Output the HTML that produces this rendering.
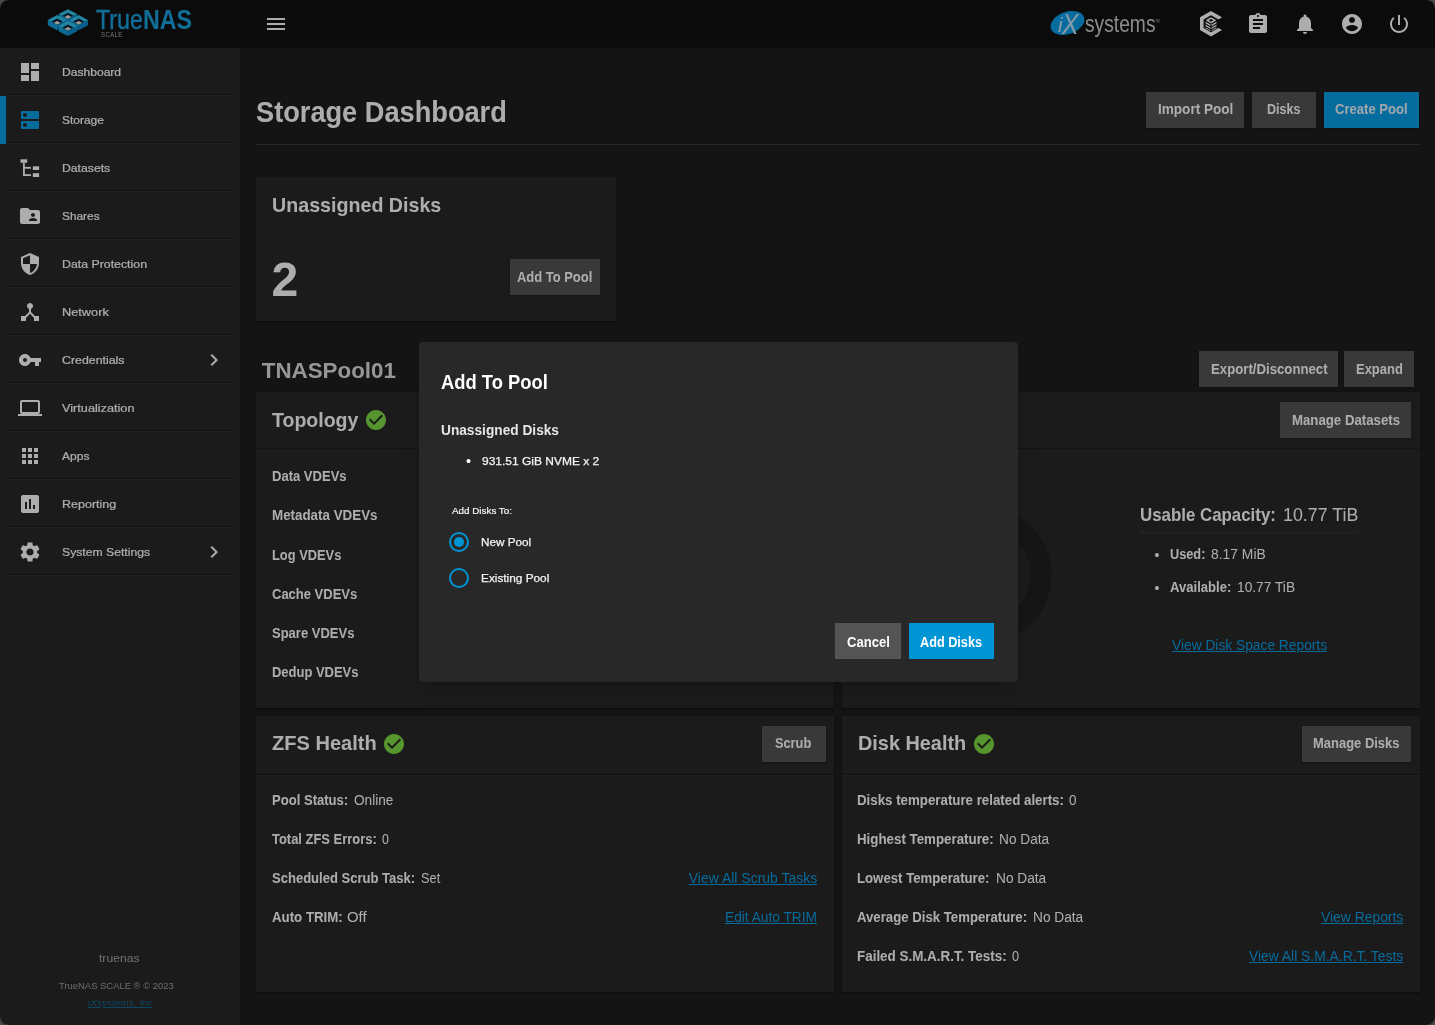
<!DOCTYPE html>
<html lang="en">
<head>
<meta charset="utf-8">
<title>TrueNAS - Storage Dashboard</title>
<style>
html,body{margin:0;padding:0;background:#1e1e1e;}
body{width:1435px;height:1025px;overflow:hidden;position:relative;font-family:"Liberation Sans",sans-serif;}
#app,#ov,#dl{position:absolute;left:0;top:0;width:1435px;height:1025px;overflow:hidden;}
#app{background:#1e1e1e;}
#ov{background:rgba(0,0,0,.32);}
.t{position:absolute;white-space:nowrap;transform-origin:0 50%;}
.a{position:absolute;}
.tl{position:absolute;left:0;top:0;width:1435px;height:1025px;will-change:transform;}
.hdr{left:0;top:0;width:1435px;height:48px;background:#111111;}
.side{left:0;top:48px;width:240px;height:977px;background:#282828;}
.sep{left:8px;width:225px;height:2px;background:#212121;box-shadow:0 -1px 0 #2d2d2d,0 1px 0 #2d2d2d;}
.card{background:#282828;box-shadow:0 2px 1px -1px rgba(0,0,0,.2),0 1px 1px rgba(0,0,0,.14),0 1px 3px rgba(0,0,0,.12);}
.btn{background:#545454;height:36px;box-shadow:0 1px 2px rgba(0,0,0,.25);}
.pri{background:#0a9ee8;}
.ln{height:1px;background:#383838;}
.dv{height:1.6px;background:#1f1f1f;box-shadow:0 -1px 0 #2d2d2d,0 1px 0 #2d2d2d;}
svg{display:block;}
.ic{position:absolute;fill:#ffffff;}
</style>
</head>
<body>
<div id="app">
<div class="a" style="left:240px;top:48px;width:1195px;height:977px;background:#1e1e1e"></div>

<!-- cards -->
<div class="a card" style="left:256px;top:176.5px;width:360.3px;height:144px"></div>
<div class="a card" style="left:256px;top:392px;width:578px;height:315.5px"></div>
<div class="a card" style="left:842px;top:392px;width:578px;height:315.5px"></div>
<div class="a card" style="left:256px;top:716px;width:578px;height:276px"></div>
<div class="a card" style="left:842px;top:716px;width:578px;height:276px"></div>

<!-- dividers -->
<div class="a ln" style="left:256px;top:144.2px;width:1164px"></div>
<div class="a dv" style="left:256px;top:448.2px;width:578px"></div>
<div class="a dv" style="left:842px;top:448.2px;width:578px"></div>
<div class="a dv" style="left:256px;top:773.2px;width:578px"></div>
<div class="a dv" style="left:842px;top:773.2px;width:578px"></div>
<div class="a" style="left:1140px;top:531.4px;width:218px;height:2.6px;background:#303030"></div>

<!-- donut -->
<svg class="a" style="left:900px;top:495px" width="160" height="160" viewBox="0 0 160 160"><circle cx="83" cy="80" r="58" fill="none" stroke="#202020" stroke-width="21"/></svg>

<!-- buttons -->
<div class="a btn" style="left:1146px;top:92px;width:98px"></div>
<div class="a btn" style="left:1252px;top:92px;width:64px"></div>
<div class="a btn pri" style="left:1324px;top:92px;width:95px"></div>
<div class="a btn" style="left:510px;top:259px;width:90px"></div>
<div class="a btn" style="left:1199px;top:351.3px;width:139.2px"></div>
<div class="a btn" style="left:1344px;top:351.3px;width:70px"></div>
<div class="a btn" style="left:1280px;top:402px;width:130.7px"></div>
<div class="a btn" style="left:762px;top:726px;width:64px"></div>
<div class="a btn" style="left:1302px;top:726px;width:108.7px"></div>

<!-- check icons -->
<svg class="ic" style="left:364px;top:408.2px;fill:#80de45" width="24" height="24" viewBox="0 0 24 24"><path d="M12 2C6.48 2 2 6.48 2 12s4.48 10 10 10 10-4.48 10-10S17.52 2 12 2zm-2 15l-5-5 1.41-1.41L10 14.17l7.59-7.59L19 8l-9 9z"/></svg>
<svg class="ic" style="left:382px;top:732px;fill:#80de45" width="24" height="24" viewBox="0 0 24 24"><path d="M12 2C6.48 2 2 6.48 2 12s4.48 10 10 10 10-4.48 10-10S17.52 2 12 2zm-2 15l-5-5 1.41-1.41L10 14.17l7.59-7.59L19 8l-9 9z"/></svg>
<svg class="ic" style="left:972px;top:732px;fill:#80de45" width="24" height="24" viewBox="0 0 24 24"><path d="M12 2C6.48 2 2 6.48 2 12s4.48 10 10 10 10-4.48 10-10S17.52 2 12 2zm-2 15l-5-5 1.41-1.41L10 14.17l7.59-7.59L19 8l-9 9z"/></svg>

<!-- header -->
<div class="a hdr"></div>
<svg style="position:absolute;left:0;top:0" width="100" height="48" viewBox="0 0 100 48"><polygon points="58.6,14.1 67.9,19.0 67.9,24.3 58.6,19.4" fill="#12a0e0"/><polygon points="77.2,14.1 67.9,19.0 67.9,24.3 77.2,19.4" fill="#0a8ccc"/><polygon points="67.9,9.2 77.2,14.1 67.9,19.0 58.6,14.1" fill="#35c4f0"/><polygon points="67.9,12.7 73.5,15.7 67.9,18.7 62.3,15.7" fill="#04233a"/><polygon points="67.9,15.1 71.2,16.9 67.9,18.7 64.6,16.9" fill="#f4e4dc"/><polygon points="47.8,20.0 57.1,24.9 57.1,30.2 47.8,25.3" fill="#12a0e0"/><polygon points="66.4,20.0 57.1,24.9 57.1,30.2 66.4,25.3" fill="#0a8ccc"/><polygon points="57.1,15.1 66.4,20.0 57.1,24.9 47.8,20.0" fill="#35c4f0"/><polygon points="57.1,18.6 62.7,21.6 57.1,24.6 51.5,21.6" fill="#04233a"/><polygon points="57.1,21.0 60.4,22.8 57.1,24.6 53.8,22.8" fill="#f4e4dc"/><polygon points="69.4,20.0 78.7,24.9 78.7,30.2 69.4,25.3" fill="#12a0e0"/><polygon points="88.0,20.0 78.7,24.9 78.7,30.2 88.0,25.3" fill="#0a8ccc"/><polygon points="78.7,15.1 88.0,20.0 78.7,24.9 69.4,20.0" fill="#35c4f0"/><polygon points="78.7,18.6 84.3,21.6 78.7,24.6 73.1,21.6" fill="#04233a"/><polygon points="78.7,21.0 82.0,22.8 78.7,24.6 75.4,22.8" fill="#f4e4dc"/><polygon points="58.6,25.9 67.9,30.8 67.9,36.1 58.6,31.2" fill="#12a0e0"/><polygon points="77.2,25.9 67.9,30.8 67.9,36.1 77.2,31.2" fill="#0a8ccc"/><polygon points="67.9,21.0 77.2,25.9 67.9,30.8 58.6,25.9" fill="#35c4f0"/><polygon points="67.9,24.5 73.5,27.5 67.9,30.5 62.3,27.5" fill="#04233a"/><polygon points="67.9,26.9 71.2,28.7 67.9,30.5 64.6,28.7" fill="#f4e4dc"/></svg>
<svg class="ic" style="left:264px;top:12px" width="24" height="24" viewBox="0 0 24 24"><path d="M3 18h18v-2H3v2zm0-5h18v-2H3v2zm0-7v2h18V6H3z"/></svg>
<div class="a" style="left:1049.5px;top:12px;width:35px;height:22px;border-radius:50%;background:#0a9ee8;transform:rotate(-19deg)"></div>
<svg class="ic" style="left:1199.6px;top:11.4px" width="23" height="26" viewBox="0 0 23 26"><path d="M11 0L22 6.300 18.400 8.400 11 4.150 3.600 8.400V17L11 21.250 18.400 17 22 19.100 11 25.400 0 19.100V6.300z"/><path d="M11 6.200L16.300 9.300 11 12.400 5.700 9.300z M11 7.900L8.600 9.300 11 10.700 13.400 9.300z M5.500 10.700L10.500 13.600v1.600L5.500 12.300z M5.500 13.500L10.500 16.400v1.600L5.500 15.100z M5.500 16.300L10.500 19.200v.9L5.500 17.200z M16.500 10.700L11.500 13.600v1.600L16.500 12.300z M16.500 13.500L11.500 16.400v1.600L16.500 15.100z M16.500 16.300L11.500 19.200v.9L16.500 17.200z" fill-rule="evenodd"/></svg>
<svg class="ic" style="left:1246px;top:12px" width="24" height="24" viewBox="0 0 24 24"><path d="M19 3h-4.18C14.4 1.84 13.3 1 12 1c-1.3 0-2.4.84-2.82 2H5c-1.1 0-2 .9-2 2v14c0 1.1.9 2 2 2h14c1.1 0 2-.9 2-2V5c0-1.1-.9-2-2-2zm-7 0c.55 0 1 .45 1 1s-.45 1-1 1-1-.45-1-1 .45-1 1-1zm2 14H7v-2h7v2zm3-4H7v-2h10v2zm0-4H7V7h10v2z"/></svg>
<svg class="ic" style="left:1292.8px;top:11.8px" width="24" height="24" viewBox="0 0 24 24"><path d="M12 22c1.1 0 2-.9 2-2h-4c0 1.1.89 2 2 2zm6-6v-5c0-3.07-1.64-5.64-4.5-6.320V4c0-.83-.67-1.5-1.5-1.5s-1.500.67-1.500 1.500v.68C7.630 5.360 6 7.920 6 11v5l-2 2v1h16v-1l-2-2z"/></svg>
<svg class="ic" style="left:1340.3px;top:11.6px" width="24" height="24" viewBox="0 0 24 24"><path d="M12 2C6.48 2 2 6.48 2 12s4.48 10 10 10 10-4.48 10-10S17.52 2 12 2zm0 3c1.66 0 3 1.34 3 3s-1.340 3-3 3-3-1.340-3-3 1.340-3 3-3zm0 14.200c-2.500 0-4.710-1.280-6-3.220.03-1.990 4-3.080 6-3.080 1.990 0 5.970 1.090 6 3.080-1.290 1.940-3.500 3.220-6 3.220z"/></svg>
<svg class="ic" style="left:1386.6px;top:11.8px" width="24" height="24" viewBox="0 0 24 24"><path d="M13 3h-2v10h2V3zm4.830 2.170l-1.420 1.420C17.990 7.860 19 9.810 19 12c0 3.870-3.130 7-7 7s-7-3.130-7-7c0-2.190 1.010-4.140 2.580-5.420L6.170 5.170C4.230 6.820 3 9.260 3 12c0 4.970 4.030 9 9 9s9-4.030 9-9c0-2.740-1.230-5.180-3.170-6.830z"/></svg>

<!-- sidebar -->
<div class="a side"></div>
<div class="a" style="left:0;top:96px;width:6px;height:48px;background:#0a9ee8"></div>
<div class="a sep" style="top:93px"></div>
<div class="a sep" style="top:141px"></div>
<div class="a sep" style="top:189px"></div>
<div class="a sep" style="top:237px"></div>
<div class="a sep" style="top:285px"></div>
<div class="a sep" style="top:333px"></div>
<div class="a sep" style="top:381px"></div>
<div class="a sep" style="top:429px"></div>
<div class="a sep" style="top:477px"></div>
<div class="a sep" style="top:525px"></div>
<div class="a sep" style="top:573px"></div>
<svg class="ic" style="left:18px;top:60px;" width="24" height="24" viewBox="0 0 24 24"><path d="M3 13h8V3H3v10zm0 8h8v-6H3v6zm10 0h8V11h-8v10zm0-18v6h8V3h-8z"/></svg>
<svg class="ic" style="left:18px;top:108px;fill:#0a9ee8;" width="24" height="24" viewBox="0 0 24 24"><path d="M20 13H4c-.55 0-1 .45-1 1v6c0 .55.45 1 1 1h16c.55 0 1-.45 1-1v-6c0-.55-.45-1-1-1zM7 19c-1.100 0-2-.9-2-2s.9-2 2-2 2 .9 2 2-.9 2-2 2zM20 3H4c-.55 0-1 .45-1 1v6c0 .55.45 1 1 1h16c.55 0 1-.45 1-1V4c0-.55-.45-1-1-1zM7 9c-1.100 0-2-.9-2-2s.9-2 2-2 2 .9 2 2-.9 2-2 2z"/></svg>
<svg class="ic" style="left:18px;top:156px;" width="24" height="24" viewBox="0 0 24 24"><rect x="2.5" y="3.3" width="6.7" height="3.5"/><rect x="5" y="6.8" width="1.8" height="13.2"/><rect x="5" y="10.9" width="8" height="1.8"/><rect x="5" y="18.2" width="8" height="1.8"/><rect x="14.8" y="10.3" width="6.3" height="3.7"/><rect x="14.8" y="17.2" width="6.3" height="3.8"/></svg>
<svg class="ic" style="left:18px;top:204px;" width="24" height="24" viewBox="0 0 24 24"><path d="M20 6h-8l-2-2H4c-1.100 0-1.990.9-1.990 2L2 18c0 1.100.9 2 2 2h16c1.100 0 2-.9 2-2V8c0-1.100-.9-2-2-2zm-5 3c1.100 0 2 .9 2 2s-.9 2-2 2-2-.9-2-2 .9-2 2-2zm4 8h-8v-1c0-1.330 2.670-2 4-2s4 .67 4 2v1z"/></svg>
<svg class="ic" style="left:18px;top:252px;" width="24" height="24" viewBox="0 0 24 24"><path d="M12 1L3 5v6c0 5.550 3.840 10.740 9 12 5.160-1.260 9-6.450 9-12V5l-9-4zm0 10.990h7c-.53 4.120-3.280 7.790-7 8.940V12H5V6.300l7-3.110v8.800z"/></svg>
<svg class="ic" style="left:18px;top:300px;" width="24" height="24" viewBox="0 0 24 24"><path d="M17 16l-4-4V8.820C14.160 8.400 15 7.300 15 6c0-1.660-1.340-3-3-3S9 4.340 9 6c0 1.300.84 2.400 2 2.820V12l-4 4H3v5h5v-3.050l4-4.200 4 4.200V21h5v-5h-4z"/></svg>
<svg class="ic" style="left:18px;top:348px;" width="24" height="24" viewBox="0 0 24 24"><path d="M12.650 10C11.830 7.670 9.610 6 7 6c-3.310 0-6 2.690-6 6s2.690 6 6 6c2.610 0 4.830-1.670 5.650-4H17v4h4v-4h2v-4H12.650zM7 14c-1.100 0-2-.9-2-2s.9-2 2-2 2 .9 2 2-.9 2-2 2z"/></svg>
<svg class="ic" style="left:18px;top:396px;" width="24" height="24" viewBox="0 0 24 24"><path d="M20 18c1.100 0 1.990-.9 1.990-2L22 6c0-1.100-.9-2-2-2H4c-1.100 0-2 .9-2 2v10c0 1.100.9 2 2 2H0v2h24v-2h-4zM4 6h16v10H4V6z"/></svg>
<svg class="ic" style="left:18px;top:444px;" width="24" height="24" viewBox="0 0 24 24"><path d="M4 8h4V4H4v4zm6 12h4v-4h-4v4zm-6 0h4v-4H4v4zm0-6h4v-4H4v4zm6 0h4v-4h-4v4zm6-10v4h4V4h-4zm-6 4h4V4h-4v4zm6 6h4v-4h-4v4zm0 6h4v-4h-4v4z"/></svg>
<svg class="ic" style="left:18px;top:492px;" width="24" height="24" viewBox="0 0 24 24"><path d="M19 3H5c-1.100 0-2 .9-2 2v14c0 1.100.9 2 2 2h14c1.100 0 2-.9 2-2V5c0-1.100-.9-2-2-2zM9 17H7v-7h2v7zm4 0h-2V7h2v10zm4 0h-2v-4h2v4z"/></svg>
<svg class="ic" style="left:18px;top:540px;" width="24" height="24" viewBox="0 0 24 24"><path d="M19.140 12.940c.04-.3.06-.61.06-.94 0-.32-.02-.64-.07-.94l2.030-1.580c.18-.14.23-.41.12-.61l-1.920-3.320c-.12-.22-.37-.29-.59-.22l-2.390.96c-.5-.38-1.030-.7-1.620-.94l-.36-2.540c-.04-.24-.24-.41-.48-.41h-3.840c-.24 0-.43.17-.47.41l-.36 2.540c-.59.24-1.130.57-1.620.94l-2.390-.96c-.22-.08-.47 0-.59.22L2.740 8.870c-.12.21-.08.47.12.61l2.030 1.580c-.05.3-.09.63-.09.94s.02.64.07.94l-2.030 1.580c-.18.14-.23.41-.12.61l1.920 3.320c.12.22.37.29.59.22l2.390-.96c.5.38 1.030.7 1.620.94l.36 2.540c.05.24.24.41.48.41h3.840c.24 0 .44-.17.47-.41l.36-2.540c.59-.24 1.130-.56 1.620-.94l2.390.96c.22.08.47 0 .59-.22l1.920-3.320c.12-.22.07-.47-.12-.61l-2.010-1.580zM12 15.600c-1.980 0-3.600-1.620-3.600-3.600s1.620-3.600 3.600-3.600 3.600 1.620 3.600 3.600-1.620 3.600-3.600 3.600z"/></svg>
<svg class="ic" style="left:202px;top:348.3px" width="24" height="24" viewBox="0 0 24 24"><path d="M10 6L8.590 7.410 13.170 12l-4.580 4.590L10 18l6-6z"/></svg>
<svg class="ic" style="left:202px;top:540.3px" width="24" height="24" viewBox="0 0 24 24"><path d="M10 6L8.590 7.410 13.170 12l-4.580 4.590L10 18l6-6z"/></svg>

<div class="tl">
<span class="t" style="left:62.2px;top:66px;line-height:12px;font-size:11.38px;color:#ffffff;transform:scaleX(1.0619);-webkit-text-stroke:.2px #fff;">Dashboard</span>
<span class="t" style="left:62.2px;top:114px;line-height:12px;font-size:11.38px;color:#ffffff;transform:scaleX(1.0491);-webkit-text-stroke:.2px #fff;">Storage</span>
<span class="t" style="left:62.2px;top:162px;line-height:12px;font-size:11.38px;color:#ffffff;transform:scaleX(1.0737);-webkit-text-stroke:.2px #fff;">Datasets</span>
<span class="t" style="left:62.2px;top:210px;line-height:12px;font-size:11.38px;color:#ffffff;transform:scaleX(1.0431);-webkit-text-stroke:.2px #fff;">Shares</span>
<span class="t" style="left:62.2px;top:258px;line-height:12px;font-size:11.38px;color:#ffffff;transform:scaleX(1.0841);-webkit-text-stroke:.2px #fff;">Data Protection</span>
<span class="t" style="left:62.2px;top:306px;line-height:12px;font-size:11.38px;color:#ffffff;transform:scaleX(1.1218);-webkit-text-stroke:.2px #fff;">Network</span>
<span class="t" style="left:62.2px;top:354px;line-height:12px;font-size:11.38px;color:#ffffff;transform:scaleX(1.0861);-webkit-text-stroke:.2px #fff;">Credentials</span>
<span class="t" style="left:62.2px;top:402px;line-height:12px;font-size:11.38px;color:#ffffff;transform:scaleX(1.1167);-webkit-text-stroke:.2px #fff;">Virtualization</span>
<span class="t" style="left:62.2px;top:450px;line-height:12px;font-size:11.38px;color:#ffffff;transform:scaleX(1.0564);-webkit-text-stroke:.2px #fff;">Apps</span>
<span class="t" style="left:62.2px;top:498px;line-height:12px;font-size:11.38px;color:#ffffff;transform:scaleX(1.0988);-webkit-text-stroke:.2px #fff;">Reporting</span>
<span class="t" style="left:62.2px;top:546px;line-height:12px;font-size:11.38px;color:#ffffff;transform:scaleX(1.0719);-webkit-text-stroke:.2px #fff;">System Settings</span>
<span class="t" style="left:99.3px;top:951px;line-height:13px;font-size:11.73px;color:#a8a8a8;transform:scaleX(1.0360);">truenas</span>
<span class="t" style="left:59.2px;top:980px;line-height:11px;font-size:9.78px;color:#a0a0a0;transform:scaleX(0.9655);">TrueNAS SCALE ® © 2023</span>
<span class="t" style="left:87.6px;top:997px;line-height:11px;font-size:9.50px;color:#0a9ee8;transform:scaleX(1.0547);font-style:italic;text-decoration:underline;opacity:.55;">iXsystems, Inc</span>
<span class="t" style="left:96.2px;top:4px;line-height:31px;font-size:27.09px;color:#1aa3e0;transform:scaleX(0.8583);"><span style="font-weight:400;-webkit-text-stroke:.45px #1aa3e0">True</span><b>NAS</b></span>
<span class="t" style="left:101.2px;top:31px;line-height:7px;font-size:6.98px;color:#b0b0b0;transform:scaleX(0.8596);letter-spacing:.5px;">SCALE</span>
<span class="t" style="left:1085.3px;top:11px;line-height:26px;font-size:23.32px;color:#d0d0d0;transform:scaleX(0.8246);">systems</span>
<span class="t" style="left:1155.2px;top:17px;line-height:11px;font-size:10.34px;color:#a0a0a0;transform:scaleX(0.4841);">™</span>
<span class="t" style="left:1057.6px;top:13px;line-height:23px;font-size:20.95px;color:#c4e4f6;transform:scaleX(0.9879);font-style:italic;">i</span>
<span class="t" style="left:1062.0px;top:8px;line-height:32px;font-size:29.19px;color:#c4e4f6;transform:scaleX(0.8475);font-style:italic;">X</span>
<span class="t" style="left:256.2px;top:95px;line-height:33px;font-size:29.89px;color:#ffffff;font-weight:700;transform:scaleX(0.9101);">Storage Dashboard</span>
<span class="t" style="left:1157.7px;top:101px;line-height:16px;font-size:14.53px;color:#ffffff;font-weight:700;transform:scaleX(0.9338);">Import Pool</span>
<span class="t" style="left:1267.0px;top:101px;line-height:16px;font-size:14.53px;color:#ffffff;font-weight:700;transform:scaleX(0.8649);">Disks</span>
<span class="t" style="left:1335.4px;top:101px;line-height:16px;font-size:14.53px;color:#eaf6ff;font-weight:700;transform:scaleX(0.8999);">Create Pool</span>
<span class="t" style="left:272.0px;top:193px;line-height:23px;font-size:20.95px;color:#ffffff;font-weight:700;transform:scaleX(0.9386);">Unassigned Disks</span>
<span class="t" style="left:271.5px;top:253px;line-height:53px;font-size:48.04px;color:#ffffff;font-weight:700;">2</span>
<span class="t" style="left:517.3px;top:269px;line-height:16px;font-size:14.53px;color:#ffffff;font-weight:700;transform:scaleX(0.8923);">Add To Pool</span>
<span class="t" style="left:261.8px;top:358px;line-height:25px;font-size:22.35px;color:#dedede;font-weight:700;">TNASPool01</span>
<span class="t" style="left:1210.7px;top:361px;line-height:16px;font-size:14.53px;color:#ffffff;font-weight:700;transform:scaleX(0.9092);">Export/Disconnect</span>
<span class="t" style="left:1355.8px;top:361px;line-height:16px;font-size:14.53px;color:#ffffff;font-weight:700;transform:scaleX(0.8925);">Expand</span>
<span class="t" style="left:272.1px;top:408px;line-height:23px;font-size:20.95px;color:#ffffff;font-weight:700;transform:scaleX(0.9325);">Topology</span>
<span class="t" style="left:1291.6px;top:412px;line-height:16px;font-size:14.53px;color:#ffffff;font-weight:700;transform:scaleX(0.9107);">Manage Datasets</span>
<span class="t" style="left:272.0px;top:468px;line-height:16px;font-size:13.97px;color:#ffffff;font-weight:700;transform:scaleX(0.9329);">Data VDEVs</span>
<span class="t" style="left:272.0px;top:507px;line-height:16px;font-size:13.97px;color:#ffffff;font-weight:700;transform:scaleX(0.9569);">Metadata VDEVs</span>
<span class="t" style="left:272.0px;top:547px;line-height:16px;font-size:13.97px;color:#ffffff;font-weight:700;transform:scaleX(0.9204);">Log VDEVs</span>
<span class="t" style="left:272.0px;top:586px;line-height:16px;font-size:13.97px;color:#ffffff;font-weight:700;transform:scaleX(0.9299);">Cache VDEVs</span>
<span class="t" style="left:272.0px;top:625px;line-height:16px;font-size:13.97px;color:#ffffff;font-weight:700;transform:scaleX(0.9309);">Spare VDEVs</span>
<span class="t" style="left:272.0px;top:664px;line-height:16px;font-size:13.97px;color:#ffffff;font-weight:700;transform:scaleX(0.9285);">Dedup VDEVs</span>
<span class="t" style="left:1140.4px;top:505px;line-height:20px;font-size:18.16px;color:#ffffff;font-weight:700;transform:scaleX(0.9287);">Usable Capacity:</span>
<span class="t" style="left:1282.7px;top:505px;line-height:20px;font-size:18.16px;color:#ffffff;transform:scaleX(0.9815);">10.77 TiB</span>
<span class="t" style="left:1154.5px;top:547px;line-height:16px;font-size:13.97px;color:#ffffff;">•</span>
<span class="t" style="left:1154.5px;top:580px;line-height:16px;font-size:13.97px;color:#ffffff;">•</span>
<span class="t" style="left:1170.3px;top:546px;line-height:16px;font-size:13.97px;color:#ffffff;font-weight:700;transform:scaleX(0.9121);">Used:</span>
<span class="t" style="left:1211.3px;top:546px;line-height:16px;font-size:13.97px;color:#ffffff;transform:scaleX(0.9923);">8.17 MiB</span>
<span class="t" style="left:1170.3px;top:579px;line-height:16px;font-size:13.97px;color:#ffffff;font-weight:700;transform:scaleX(0.9376);">Available:</span>
<span class="t" style="left:1237.2px;top:579px;line-height:16px;font-size:13.97px;color:#ffffff;transform:scaleX(0.9842);">10.77 TiB</span>
<span class="t" style="left:1172.2px;top:637px;line-height:16px;font-size:13.97px;color:#0a9ee8;transform:scaleX(0.9856);text-decoration:underline;">View Disk Space Reports</span>
<span class="t" style="left:272.0px;top:731px;line-height:23px;font-size:20.95px;color:#ffffff;font-weight:700;transform:scaleX(0.9574);">ZFS Health</span>
<span class="t" style="left:775.3px;top:735px;line-height:16px;font-size:14.53px;color:#ffffff;font-weight:700;transform:scaleX(0.8799);">Scrub</span>
<span class="t" style="left:272.0px;top:792px;line-height:16px;font-size:13.97px;color:#ffffff;font-weight:700;transform:scaleX(0.9350);">Pool Status:</span>
<span class="t" style="left:353.5px;top:792px;line-height:16px;font-size:13.97px;color:#ffffff;transform:scaleX(0.9755);">Online</span>
<span class="t" style="left:272.0px;top:831px;line-height:16px;font-size:13.97px;color:#ffffff;font-weight:700;transform:scaleX(0.9260);">Total ZFS Errors:</span>
<span class="t" style="left:382.3px;top:831px;line-height:16px;font-size:13.97px;color:#ffffff;transform:scaleX(0.8867);">0</span>
<span class="t" style="left:272.0px;top:870px;line-height:16px;font-size:13.97px;color:#ffffff;font-weight:700;transform:scaleX(0.9332);">Scheduled Scrub Task:</span>
<span class="t" style="left:420.8px;top:870px;line-height:16px;font-size:13.97px;color:#ffffff;transform:scaleX(0.9156);">Set</span>
<span class="t" style="left:272.0px;top:909px;line-height:16px;font-size:13.97px;color:#ffffff;font-weight:700;transform:scaleX(0.9505);">Auto TRIM:</span>
<span class="t" style="left:347.4px;top:909px;line-height:16px;font-size:13.97px;color:#ffffff;transform:scaleX(1.0667);">Off</span>
<span class="t" style="left:688.8px;top:870px;line-height:16px;font-size:13.97px;color:#0a9ee8;text-decoration:underline;">View All Scrub Tasks</span>
<span class="t" style="left:725.1px;top:909px;line-height:16px;font-size:13.97px;color:#0a9ee8;transform:scaleX(0.9820);text-decoration:underline;">Edit Auto TRIM</span>
<span class="t" style="left:857.6px;top:731px;line-height:23px;font-size:20.95px;color:#ffffff;font-weight:700;transform:scaleX(0.9487);">Disk Health</span>
<span class="t" style="left:1313.1px;top:735px;line-height:16px;font-size:14.53px;color:#ffffff;font-weight:700;transform:scaleX(0.8935);">Manage Disks</span>
<span class="t" style="left:857.4px;top:792px;line-height:16px;font-size:13.97px;color:#ffffff;font-weight:700;transform:scaleX(0.9517);">Disks temperature related alerts:</span>
<span class="t" style="left:1069.0px;top:792px;line-height:16px;font-size:13.97px;color:#ffffff;transform:scaleX(0.9639);">0</span>
<span class="t" style="left:857.4px;top:831px;line-height:16px;font-size:13.97px;color:#ffffff;font-weight:700;transform:scaleX(0.9537);">Highest Temperature:</span>
<span class="t" style="left:999.3px;top:831px;line-height:16px;font-size:13.97px;color:#ffffff;transform:scaleX(0.9795);">No Data</span>
<span class="t" style="left:857.4px;top:870px;line-height:16px;font-size:13.97px;color:#ffffff;font-weight:700;transform:scaleX(0.9448);">Lowest Temperature:</span>
<span class="t" style="left:995.6px;top:870px;line-height:16px;font-size:13.97px;color:#ffffff;transform:scaleX(0.9795);">No Data</span>
<span class="t" style="left:857.4px;top:909px;line-height:16px;font-size:13.97px;color:#ffffff;font-weight:700;transform:scaleX(0.9443);">Average Disk Temperature:</span>
<span class="t" style="left:1032.8px;top:909px;line-height:16px;font-size:13.97px;color:#ffffff;transform:scaleX(0.9795);">No Data</span>
<span class="t" style="left:857.4px;top:948px;line-height:16px;font-size:13.97px;color:#ffffff;font-weight:700;transform:scaleX(0.9605);">Failed S.M.A.R.T. Tests:</span>
<span class="t" style="left:1012.3px;top:948px;line-height:16px;font-size:13.97px;color:#ffffff;transform:scaleX(0.9124);">0</span>
<span class="t" style="left:1320.9px;top:909px;line-height:16px;font-size:13.97px;color:#0a9ee8;transform:scaleX(0.9936);text-decoration:underline;">View Reports</span>
<span class="t" style="left:1249.0px;top:948px;line-height:16px;font-size:13.97px;color:#0a9ee8;transform:scaleX(0.9914);text-decoration:underline;">View All S.M.A.R.T. Tests</span>
</div>
</div>
<div id="ov"></div>
<div id="dl">
<div class="a" style="left:418.5px;top:342px;width:599.2px;height:340px;background:#282828;border-radius:4px;box-shadow:0 6px 12px -4px rgba(0,0,0,.18),0 12px 30px 2px rgba(0,0,0,.08)"></div>
<div class="a" style="left:834.8px;top:622.7px;width:66.3px;height:36px;background:#545454"></div>
<div class="a" style="left:908.9px;top:622.7px;width:85.3px;height:36px;background:#0095d5"></div>
<div class="a" style="left:449px;top:532px;width:16px;height:16px;border:2px solid #0095d5;border-radius:50%"></div>
<div class="a" style="left:454px;top:537px;width:10px;height:10px;background:#0095d5;border-radius:50%"></div>
<div class="a" style="left:449px;top:568.2px;width:16px;height:16px;border:2px solid #0095d5;border-radius:50%"></div>
<div class="tl">
<span class="t" style="left:441.4px;top:371px;line-height:22px;font-size:19.55px;color:#ffffff;font-weight:700;transform:scaleX(0.9406);">Add To Pool</span>
<span class="t" style="left:441.4px;top:421px;line-height:17px;font-size:14.94px;color:#e6e6e6;font-weight:700;transform:scaleX(0.9169);">Unassigned Disks</span>
<span class="t" style="left:465.9px;top:453px;line-height:16px;font-size:14.53px;color:#ffffff;">•</span>
<span class="t" style="left:481.8px;top:455px;line-height:12px;font-size:11.31px;color:#f4f4f4;transform:scaleX(1.0605);-webkit-text-stroke:.25px #f4f4f4;">931.51 GiB NVME x 2</span>
<span class="t" style="left:452.0px;top:505px;line-height:11px;font-size:9.78px;color:#f4f4f4;transform:scaleX(1.0079);-webkit-text-stroke:.2px #f4f4f4;">Add Disks To:</span>
<span class="t" style="left:481.3px;top:536px;line-height:12px;font-size:11.45px;color:#f4f4f4;transform:scaleX(1.0255);-webkit-text-stroke:.25px #f4f4f4;">New Pool</span>
<span class="t" style="left:481.3px;top:572px;line-height:12px;font-size:11.45px;color:#f4f4f4;transform:scaleX(1.0329);-webkit-text-stroke:.25px #f4f4f4;">Existing Pool</span>
<span class="t" style="left:846.8px;top:633px;line-height:17px;font-size:14.94px;color:#ffffff;font-weight:700;transform:scaleX(0.8735);">Cancel</span>
<span class="t" style="left:920.0px;top:633px;line-height:17px;font-size:14.94px;color:#ffffff;font-weight:700;transform:scaleX(0.8488);">Add Disks</span>
</div>
</div>
<div class="a" style="left:0;top:0;width:8px;height:8px;background:radial-gradient(circle at 100% 100%,rgba(70,70,70,0) 7px,#484848 8.5px)"></div>
<div class="a" style="left:1427px;top:0;width:8px;height:8px;background:radial-gradient(circle at 0 100%,rgba(70,70,70,0) 7px,#484848 8.5px)"></div>
<div class="a" style="left:0;top:1017px;width:8px;height:8px;background:radial-gradient(circle at 100% 0,rgba(70,70,70,0) 7px,#484848 8.5px)"></div>
<div class="a" style="left:1427px;top:1017px;width:8px;height:8px;background:radial-gradient(circle at 0 0,rgba(70,70,70,0) 7px,#484848 8.5px)"></div>
</body>
</html>
